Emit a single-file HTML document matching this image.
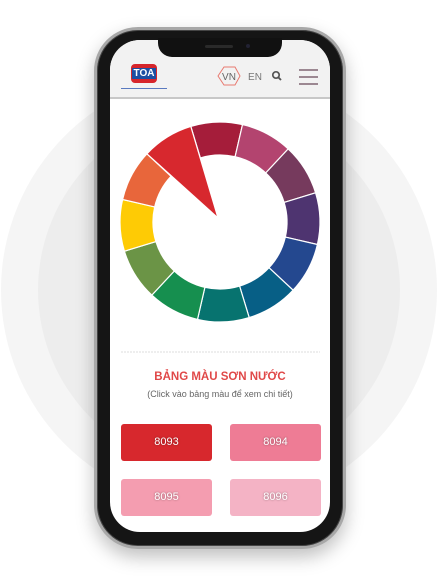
<!DOCTYPE html>
<html><head><meta charset="utf-8"><style>
html,body{margin:0;padding:0;width:438px;height:577px;background:#fff;overflow:hidden;font-family:"Liberation Sans",sans-serif}
.bg{position:absolute;left:1px;top:72px;width:436px;height:436px;border-radius:50%;background:#f5f5f5}
.bg2{position:absolute;left:38px;top:109px;width:362px;height:362px;border-radius:50%;background:#ededed}
.phone{position:absolute;left:94px;top:27px;width:252px;height:522px;border-radius:44px;background:#151515;border:3px solid #a8a8a8;box-sizing:border-box;box-shadow:0 8px 18px rgba(0,0,0,.25),inset 0 0 0 1px #444}
.screen{position:absolute;left:110px;top:40px;width:220px;height:492px;border-radius:30px;background:#fff;overflow:hidden}
.notch{position:absolute;left:158px;top:38px;width:124px;height:19px;background:#111;border-radius:0 0 14px 14px}
.hdr{position:absolute;left:0;top:0;width:220px;height:57px;background:#f2f2f2;border-bottom:2px solid #c8c8c8}
.t{position:absolute;white-space:nowrap}
.btn{position:absolute;width:91px;height:37px;border-radius:3px;color:#fff;font-size:11px;text-align:center;line-height:37px;text-shadow:0 0 2px rgba(0,0,0,.4)}
</style></head><body>
<div class="bg"></div><div class="bg2"></div>
<div class="phone"></div>
<div class="screen">
 <div class="hdr">
  <div style="position:absolute;left:21px;top:24px;width:26px;height:19px;background:#d6252b;border-radius:4px"></div>
  <div style="position:absolute;left:22px;top:28px;width:24px;height:11px;background:#1d4fa3;color:#fff;font-size:10px;font-weight:bold;line-height:11px;text-align:center">TOA</div>
  <div style="position:absolute;left:11px;top:48px;width:46px;height:1px;background:#5a7ac0"></div>
  <svg style="position:absolute;left:0;top:0" width="220" height="57">
   <polygon points="108,36 114,27 125,27 130,36 125,45 114,45" fill="none" stroke="#e87a70" stroke-width="1"/>
   <text x="119" y="40" font-size="10" fill="#666" text-anchor="middle" font-family="Liberation Sans">VN</text>
   <text x="145" y="40" font-size="10" fill="#777" text-anchor="middle" font-family="Liberation Sans">EN</text>
   <circle cx="166" cy="35" r="3.2" fill="none" stroke="#555" stroke-width="1.7"/>
   <line x1="168.5" y1="37.5" x2="171" y2="40" stroke="#555" stroke-width="1.9"/>
   <g stroke="#6a4a5a" stroke-width="1.2"><line x1="189" y1="30" x2="208" y2="30"/><line x1="189" y1="37" x2="208" y2="37"/><line x1="189" y1="44" x2="208" y2="44"/></g>
  </svg>
 </div>
</div>
<div class="notch"></div>
<div style="position:absolute;left:205px;top:45px;width:28px;height:3px;border-radius:2px;background:#2a2a2a"></div>
<div style="position:absolute;left:246px;top:44px;width:4px;height:4px;border-radius:50%;background:#223"></div>
<svg style="position:absolute;left:0;top:0" width="438" height="577">
 <g stroke="#fff" stroke-width="1.2" transform="translate(220,222)">
  <path d="M-29.2,-95.6 A100,100 0 0,1 22.5,-97.4 L15.1,-65.3 A67,67 0 0,0 -19.6,-64.1Z" fill="#a51d3a"/>
  <path d="M22.5,-97.4 A100,100 0 0,1 68.2,-73.1 L45.7,-49 A67,67 0 0,0 15.1,-65.3Z" fill="#b3446f"/>
  <path d="M68.2,-73.1 A100,100 0 0,1 95.6,-29.2 L64.1,-19.6 A67,67 0 0,0 45.7,-49Z" fill="#763a5d"/>
  <path d="M95.6,-29.2 A100,100 0 0,1 97.4,22.5 L65.3,15.1 A67,67 0 0,0 64.1,-19.6Z" fill="#4e3470"/>
  <path d="M97.4,22.5 A100,100 0 0,1 73.1,68.2 L49,45.7 A67,67 0 0,0 65.3,15.1Z" fill="#24488f"/>
  <path d="M73.1,68.2 A100,100 0 0,1 29.2,95.6 L19.6,64.1 A67,67 0 0,0 49,45.7Z" fill="#075f86"/>
  <path d="M29.2,95.6 A100,100 0 0,1 -22.5,97.4 L-15.1,65.3 A67,67 0 0,0 19.6,64.1Z" fill="#07736f"/>
  <path d="M-22.5,97.4 A100,100 0 0,1 -68.2,73.1 L-45.7,49 A67,67 0 0,0 -15.1,65.3Z" fill="#168f4f"/>
  <path d="M-68.2,73.1 A100,100 0 0,1 -95.6,29.2 L-64.1,19.6 A67,67 0 0,0 -45.7,49Z" fill="#6b9446"/>
  <path d="M-95.6,29.2 A100,100 0 0,1 -97.4,-22.5 L-65.3,-15.1 A67,67 0 0,0 -64.1,19.6Z" fill="#fecb05"/>
  <path d="M-97.4,-22.5 A100,100 0 0,1 -73.1,-68.2 L-49,-45.7 A67,67 0 0,0 -65.3,-15.1Z" fill="#e8663b"/>
  <path d="M-73.1,-68.2 A100,100 0 0,1 -29.2,-95.6 L-2,-4 Z" fill="#d7282e"/>
 </g>
 <line x1="121" y1="352" x2="320" y2="352" stroke="#ddd" stroke-width="1" stroke-dasharray="2,1"/>
</svg>
<div class="t" style="left:0;width:440px;text-align:center;top:371px;font-size:11.5px;font-weight:bold;color:#e04848">BẢNG MÀU SƠN NƯỚC</div>
<div class="t" style="left:0;width:440px;text-align:center;top:389px;font-size:9px;color:#666">(Click vào bảng màu để xem chi tiết)</div>
<div class="btn" style="left:121px;top:424px;background:#d7282d">8093</div>
<div class="btn" style="left:230px;top:424px;background:#ee7c95">8094</div>
<div class="btn" style="left:121px;top:479px;background:#f49db0">8095</div>
<div class="btn" style="left:230px;top:479px;background:#f4b3c5">8096</div>
</body></html>
